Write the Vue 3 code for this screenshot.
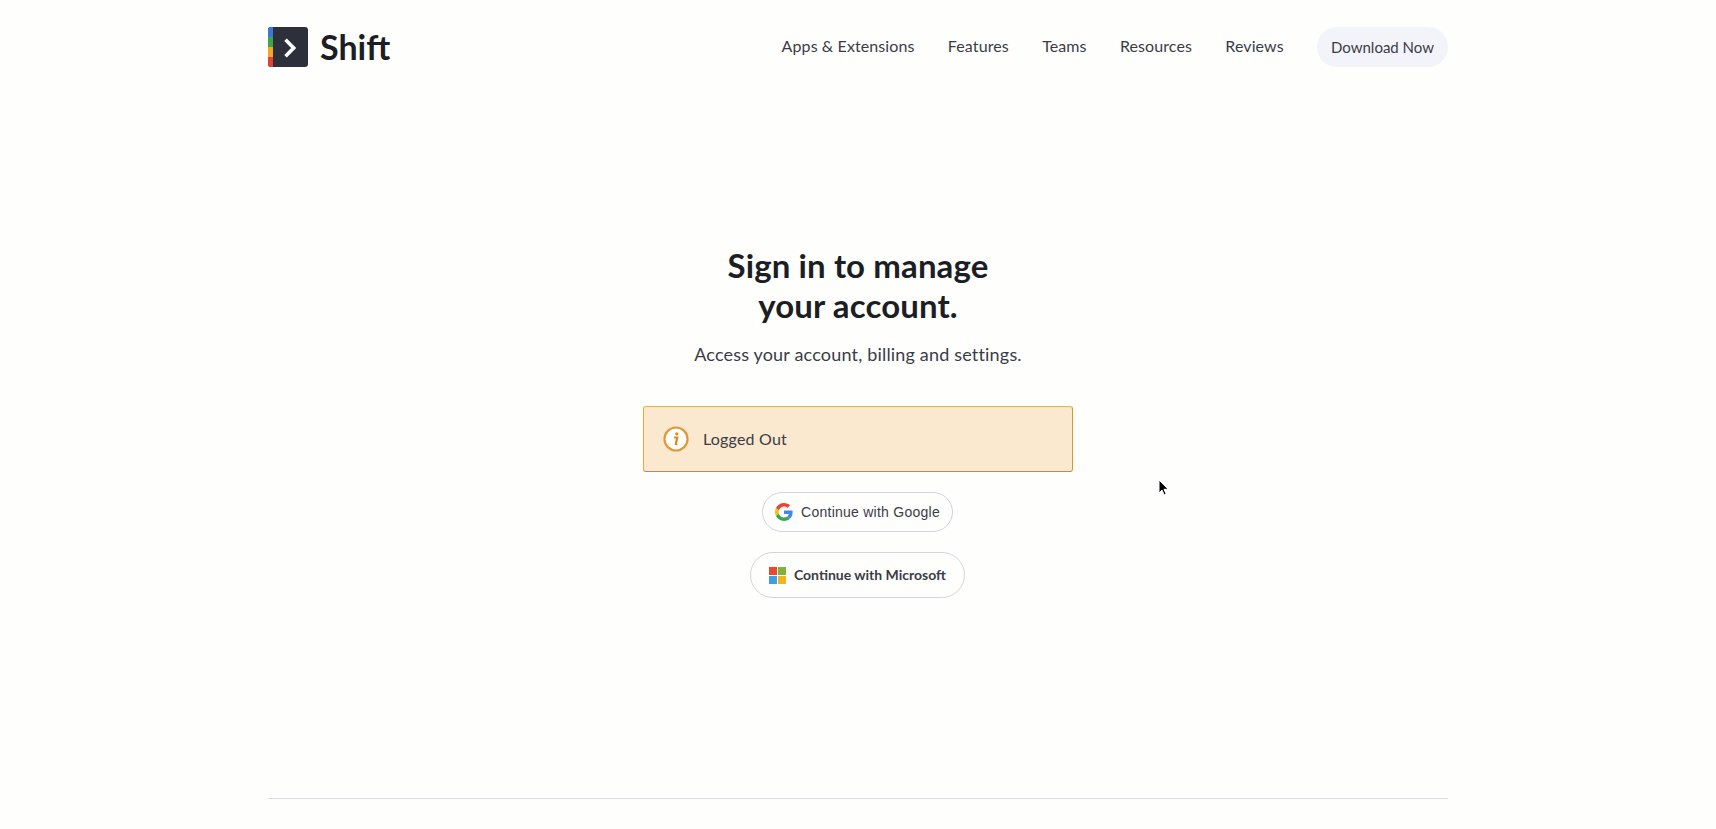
<script setup>
const navLinks = ["Apps & Extensions", "Features", "Teams", "Resources", "Reviews"];
</script>

<template>
  <div class="page">
    <header class="site-header">
      <a class="logo" href="#">
        <svg class="logo-mark" width="40" height="40" viewBox="0 0 40 40">
          <rect x="0" y="0" width="40" height="40" rx="3" fill="#2d2f3b" />
          <path d="M3 0h2v10H0V3a3 3 0 0 1 3-3z" fill="#3b78d8" />
          <rect x="0" y="10" width="5" height="10" fill="#3fa648" />
          <rect x="0" y="20" width="5" height="10" fill="#f3a81f" />
          <path d="M0 30h5v10H3a3 3 0 0 1-3-3z" fill="#dd4433" />
          <path d="M17.500 12.800 25.700 21l-8.200 8.200" fill="none" stroke="#fff" stroke-width="3.600" />
        </svg>
        <span class="logo-text">Shift</span>
      </a>
      <nav class="nav">
        <a v-for="link in navLinks" :key="link" class="nav-link" href="#">{{ link }}</a>
        <a class="download" href="#">Download Now</a>
      </nav>
    </header>

    <main class="signin">
      <h1 class="title">Sign in to manage<br />your account.</h1>
      <p class="subtitle">Access your account, billing and settings.</p>

      <div class="alert">
        <svg width="26" height="26" viewBox="0 0 26 26">
          <circle cx="13" cy="13" r="11.500" fill="#fff" stroke="#e09a35" stroke-width="2.200" />
          <circle cx="13.800" cy="7.800" r="1.600" fill="#e08a1e" />
          <path d="M11 11.500h3.300l-1.500 6.200c-.1.500.3.700 1.500.2" fill="none" stroke="#e08a1e" stroke-width="2.200" />
        </svg>
        <span class="alert-text">Logged Out</span>
      </div>

      <button class="oauth google" type="button">
        <svg width="18" height="18" viewBox="0 0 48 48">
          <path fill="#EA4335" d="M24 9.500c3.540 0 6.710 1.220 9.210 3.600l6.850-6.850C35.900 2.380 30.470 0 24 0 14.620 0 6.510 5.380 2.560 13.220l7.980 6.190C12.430 13.720 17.740 9.500 24 9.500z" />
          <path fill="#4285F4" d="M46.980 24.550c0-1.570-.15-3.090-.38-4.550H24v9.020h12.940c-.58 2.960-2.260 5.480-4.780 7.180l7.730 6c4.510-4.180 7.090-10.360 7.090-17.650z" />
          <path fill="#FBBC05" d="M10.530 28.590c-.48-1.450-.76-2.990-.76-4.590s.27-3.140.76-4.590l-7.980-6.190C.92 16.460 0 20.120 0 24c0 3.880.92 7.540 2.560 10.780l7.970-6.190z" />
          <path fill="#34A853" d="M24 48c6.480 0 11.930-2.130 15.890-5.810l-7.730-6c-2.150 1.450-4.920 2.300-8.160 2.300-6.260 0-11.570-4.220-13.470-9.910l-7.980 6.190C6.510 42.620 14.620 48 24 48z" />
        </svg>
        <span>Continue with Google</span>
      </button>

      <button class="oauth microsoft" type="button">
        <svg width="17" height="17" viewBox="0 0 17 17">
          <rect x="0" y="0" width="8" height="8" fill="#e8492a" />
          <rect x="9" y="0" width="8" height="8" fill="#7fb23a" />
          <rect x="0" y="9" width="8" height="8" fill="#3f9ee6" />
          <rect x="9" y="9" width="8" height="8" fill="#f2b51c" />
        </svg>
        <span class="ms-text">Continue with Microsoft</span>
      </button>
    </main>

    <footer class="site-footer"></footer>

    <svg class="cursor" width="12" height="18" viewBox="0 0 12 18">
      <path d="M1 1v13l3-3 2.200 5 2-.9L6 10.300h4.200z" fill="#000" stroke="#fff" stroke-width="1" />
    </svg>
  </div>
</template>

<style>
html,
body {
  margin: 0;
  background: #fefefc;
}
</style>

<style scoped>
.page {
  position: relative;
  width: 1180px;
  height: 829px;
  margin: 0 auto;
  font-family: Lato, "Open Sans", sans-serif;
  color: #3a3c48;
}

a {
  text-decoration: none;
  color: inherit;
}

.site-header {
  display: flex;
  align-items: center;
  justify-content: space-between;
  padding-top: 27px;
  height: 40px;
}

.logo {
  display: flex;
  align-items: center;
  gap: 12px;
}

.logo-text {
  padding-bottom: 2px;
  font-size: 34px;
  font-weight: 700;
  color: #1c1e26;
}

.nav {
  display: flex;
  align-items: center;
  gap: 33.300px;
}

.nav-link {
  padding-bottom: 3px;
  font-size: 16px;
  letter-spacing: 0.1px;
}

.download {
  padding: 0 14px;
  height: 40px;
  line-height: 40px;
  border-radius: 20px;
  background: #f3f4f9;
  font-size: 15px;
}

.signin {
  display: flex;
  flex-direction: column;
  align-items: center;
  padding-top: 178px;
}

.title {
  margin: 0;
  font-size: 33px;
  line-height: 40px;
  font-weight: 700;
  letter-spacing: 0.1px;
  text-align: center;
  color: #1c1e26;
}

.subtitle {
  margin: 17px 0 0;
  font-size: 18px;
  line-height: 24px;
  letter-spacing: 0.18px;
}

.alert {
  display: flex;
  align-items: center;
  gap: 14px;
  box-sizing: border-box;
  width: 430px;
  height: 66px;
  margin-top: 40px;
  padding: 0 19px;
  border: 1px solid;
  border-color: #f0b435 #d9982f #b58a5c #e8a93a;
  border-radius: 3px;
  background: #fae8cf;
  font-size: 16px;
}

.alert-text {
  padding-bottom: 2px;
  letter-spacing: 0.2px;
}

.oauth {
  display: flex;
  align-items: center;
  justify-content: center;
  box-sizing: border-box;
  border: 1px solid #d3d5dd;
  background: #fefefc;
  color: #3a3c48;
  font-family: inherit;
  cursor: pointer;
}

.google {
  gap: 8px;
  width: 191px;
  height: 40px;
  margin: 20px 1px 0 0;
  border-radius: 20px;
  font-family: "Liberation Sans", Arial, sans-serif;
  font-size: 14px;
  letter-spacing: 0.25px;
}

.microsoft {
  gap: 8px;
  width: 215px;
  height: 46px;
  margin: 20px 1px 0 0;
  border-radius: 23px;
  font-size: 14px;
  font-weight: 700;
}

.ms-text {
  padding-bottom: 1px;
}

.site-footer {
  margin-top: 200px;
  border-top: 1px solid #d9dadf;
}

.cursor {
  position: absolute;
  left: 890px;
  top: 479px;
}
</style>
